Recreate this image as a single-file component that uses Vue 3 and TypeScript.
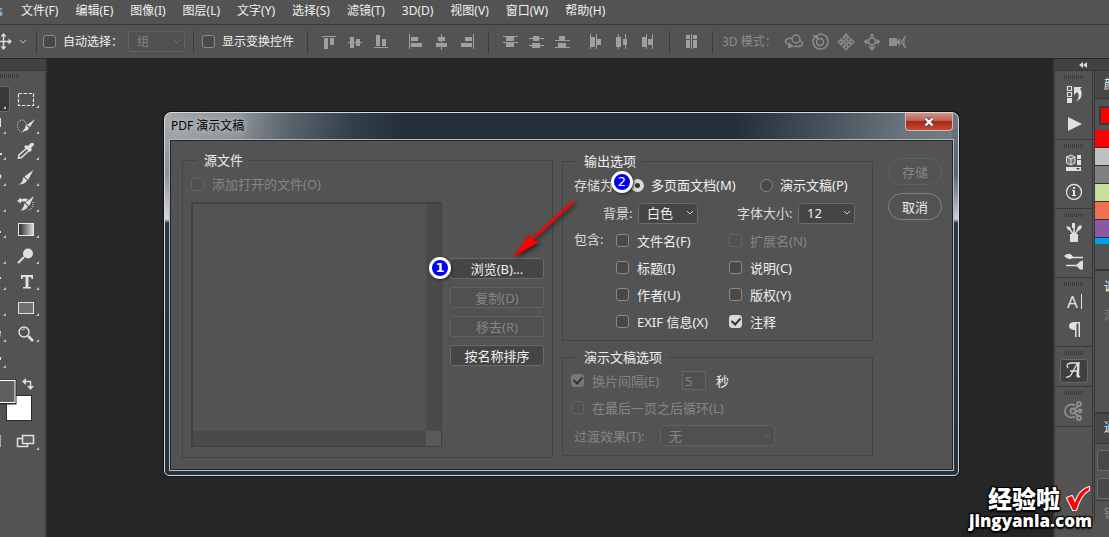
<script setup lang="ts">
import { ref } from 'vue'

interface Tool { name: string; kind: string }
interface Rail { name: string; icons: string[] }

const menus: string[] = ['文件(F)', '编辑(E)', '图像(I)', '图层(L)', '文字(Y)', '选择(S)', '滤镜(T)', '3D(D)', '视图(V)', '窗口(W)', '帮助(H)']

const alignGroups: { name: string; d: string }[][] = [
  [
    { name: '顶对齐', d: 'M1 2h14v1H1zM3 4h4v11H3zM9 4h4v7H9z' },
    { name: '垂直居中对齐', d: 'M1 8h14v1H1zM3 3h4v11H3zM9 5h4v7H9z' },
    { name: '底对齐', d: 'M1 13h14v1H1zM3 1h4v11H3zM9 5h4v7H9z' },
  ],
  [
    { name: '左对齐', d: 'M2 0h1v15H2zM4 3h7v4H4zM4 9h11v4H4z' },
    { name: '水平居中对齐', d: 'M8 0h1v16H8zM5 3h7v4H5zM3 9h11v4H3z' },
    { name: '右对齐', d: 'M14 0h1v15h-1zM6 3h7v4H6zM2 9h11v4H2z' },
  ],
  [
    { name: '按顶分布', d: 'M1 2h15v1H1zM4 3h8v4H4zM1 8h15v1H1zM4 9h8v4H4z' },
    { name: '垂直居中分布', d: 'M1 4h15v1H1zM5 2h6v5H5zM1 11h15v1H1zM4 9h8v5H4z' },
    { name: '按底分布', d: 'M1 6h15v1H1zM5 2h6v4H5zM1 13h15v1H1zM4 9h8v4H4z' },
  ],
  [
    { name: '按左分布', d: 'M2 0h1v15H2zM3 3h4v10H3zM8 0h1v15H8zM9 5h4v6H9z' },
    { name: '水平居中分布', d: 'M4 0h1v15H4zM2 3h5v10H2zM11 0h1v15h-1zM9 5h4v6H9z' },
    { name: '按右分布', d: 'M6 0h1v15H6zM2 3h4v10H2zM12 0h1v15h-1zM8 5h4v6H8z' },
  ],
]

const tools: Tool[] = [
  { name: '矩形选框', kind: 'marquee' },
  { name: '快速选择', kind: 'quick' },
  { name: '吸管', kind: 'dropper' },
  { name: '画笔', kind: 'brush' },
  { name: '历史记录画笔', kind: 'history' },
  { name: '渐变', kind: 'gradient' },
  { name: '减淡', kind: 'dodge' },
  { name: '文字', kind: 'type' },
  { name: '矩形', kind: 'rect' },
  { name: '缩放', kind: 'zoom' },
]

const edgePaths: string[] = [
  '', 'M0 6h1v9H0z', 'M0 15h2v2H0z', 'M0 10q3 2 0 5z', '', 'M0 15h1v2H0z', '', 'M0 9h1v2H0z', '', 'M0 11h1l-1 7z', 'M0 11h1v3H0z',
]

const rails: Rail[] = [
  { name: '历史记录', icons: ['history', 'play'] },
  { name: '属性', icons: ['props', 'info'] },
  { name: '画笔', icons: ['brushes', 'presets'] },
  { name: '字符', icons: ['char', 'para'] },
  { name: '字形', icons: ['glyph'] },
  { name: '共享', icons: ['share'] },
]

const saveAs = ref<string>('multi')
const background = ref<string>('白色')
const fontSize = ref<string>('12')
const transition = ref<string>('无')
const seconds = ref<string>('5')

const includes = ref([
  { label: '文件名(F)', on: false, off: false },
  { label: '扩展名(N)', on: false, off: true },
  { label: '标题(I)', on: false, off: false },
  { label: '说明(C)', on: false, off: false },
  { label: '作者(U)', on: false, off: false },
  { label: '版权(Y)', on: false, off: false },
  { label: 'EXIF 信息(X)', on: false, off: false },
  { label: '注释', on: true, off: false },
])
</script>

<template>
  <div class="app">
    <nav class="menubar">
      <span class="logo">Ps</span>
      <button v-for="m in menus" :key="m" type="button" class="menu">{{ m }}</button>
    </nav>

    <div class="options">
      <svg class="move" width="12" height="18" viewBox="0 0 12 18" aria-hidden="true">
        <path d="M0 8.500h9M3.500 3v12" stroke="#dcdcdc" stroke-width="1.500" fill="none" />
        <path d="M3.500 0l3 3.500h-6zM3.500 17l3-3.500h-6zM12 8.500L8.500 5.500v6z" fill="#dcdcdc" />
      </svg>
      <svg class="movechev" width="8" height="6" viewBox="0 0 8 6" aria-hidden="true"><path d="M1 1l3 3 3-3" fill="none" stroke="#c8c8c8" /></svg>
      <i class="sep"></i>
      <label class="opt auto"><input type="checkbox" class="box" />自动选择：</label>
      <span class="pick off group">
        <select disabled aria-label="自动选择目标"><option>组</option></select>
        <svg width="8" height="6" viewBox="0 0 8 6" aria-hidden="true"><path d="M1 1l3 3 3-3" /></svg>
      </span>
      <i class="sep"></i>
      <label class="opt show"><input type="checkbox" class="box" />显示变换控件</label>
      <i class="sep"></i>
      <template v-for="(g, gi) in alignGroups" :key="gi">
        <div class="aligns">
          <button v-for="a in g" :key="a.name" type="button" class="ico" :aria-label="a.name">
            <svg width="16" height="16" viewBox="0 0 16 16" shape-rendering="crispEdges"><path :d="a.d" fill="#a0a0a0" /></svg>
          </button>
        </div>
        <i v-if="gi % 2 === 1" class="sep"></i>
      </template>
      <div class="aligns">
        <button type="button" class="ico" aria-label="自动对齐图层">
          <svg width="16" height="16" viewBox="0 0 16 16" shape-rendering="crispEdges"><path d="M3 1h4v4H3zM3 6h4v8H3zM8 0h1v15H8zM10 1h4v4h-4zM10 6h4v8h-4z" fill="#a0a0a0" /></svg>
        </button>
      </div>
      <i class="sep"></i>
      <span class="mode">3D 模式：</span>
      <div class="modes">
        <button type="button" class="ico" aria-label="旋转 3D 对象">
          <svg width="20" height="18" viewBox="0 0 20 18" fill="none" stroke="#8c8c8c" stroke-width="1.500"><circle cx="12" cy="6" r="4" /><path d="M7.500 5C2 5 0 8 3 10.500l3 2M16 7c4 3 3 6-2 6.500l-4-.5" /><path d="M5 9l5 5-6 1z" fill="#8c8c8c" stroke="none" /></svg>
        </button>
        <button type="button" class="ico" aria-label="滚动 3D 对象">
          <svg width="18" height="18" viewBox="0 0 18 18" fill="none" stroke="#8c8c8c" stroke-width="1.500"><circle cx="9" cy="9" r="3.500" /><path d="M4 3.500a7.500 7.500 0 1 0 3-2" /><path d="M1 2h6v5z" fill="#8c8c8c" stroke="none" /></svg>
        </button>
        <button type="button" class="ico" aria-label="拖动 3D 对象">
          <svg width="18" height="18" viewBox="0 0 18 18" fill="none" stroke="#8c8c8c" stroke-width="1.300"><path d="M9 1l3 3.500h-2v3.500h3.500V6L17 9l-3.500 3v-2H10v3.500h2L9 17l-3-3.500h2V10H4.500v2L1 9l3.500-3v2H8V4.500H6z" /></svg>
        </button>
        <button type="button" class="ico" aria-label="滑动 3D 对象">
          <svg width="18" height="18" viewBox="0 0 18 18"><circle cx="9" cy="8.500" r="3.500" fill="none" stroke="#8c8c8c" stroke-width="1.500" /><path d="M9 0l2.500 3.500h-5zM9 18l4-4.500H5zM0 9l4.500-3.500v6zM18 9l-4.500-3.500v6z" fill="#8c8c8c" /></svg>
        </button>
        <button type="button" class="ico" aria-label="缩放 3D 相机">
          <svg width="20" height="14" viewBox="0 0 20 14"><path d="M1 3h8v8H1zM9 6l3-3v8L9 8z" fill="#8c8c8c" /><path d="M18 1l-5 6 5 6M16 4v6" fill="none" stroke="#8c8c8c" stroke-width="1.200" /></svg>
        </button>
      </div>
    </div>

    <div class="work">
      <aside class="toolbar">
        <div class="cap"></div>
        <div class="tgrip"><i class="grip"></i></div>
        <div class="tcols">
          <div class="tcol edge">
            <button v-for="(p, i) in edgePaths" :key="i" type="button" class="ecell" :class="{ on: i === 0 }" :aria-label="'工具 ' + (i + 1)">
              <svg width="10" height="26" viewBox="0 0 10 26"><path :d="p" fill="#e0e0e0" /><path d="M6 19v3H3z" fill="#c4c4c4" /></svg>
            </button>
          </div>
          <div class="tcol">
            <button v-for="t in tools" :key="t.kind" type="button" class="tcell" :aria-label="t.name">
              <svg width="26" height="26" viewBox="0 0 26 26">
                <rect v-if="t.kind === 'marquee'" x="4.500" y="7.500" width="15" height="12" fill="none" stroke="#e4e4e4" stroke-width="1.200" stroke-dasharray="3.500 1.500" />
                <g v-else-if="t.kind === 'quick'">
                  <ellipse cx="8" cy="14" rx="4.500" ry="6" fill="none" stroke="#e4e4e4" stroke-dasharray="1 1" />
                  <path d="M21 7l-5 8-3-2zM12 13l3 3q-2 4-7 3 3-1 4-6z" fill="#e0e0e0" />
                </g>
                <g v-else-if="t.kind === 'dropper'">
                  <path d="M13 10l-8 7-.5 3 3-.5 8-7.500" fill="none" stroke="#e0e0e0" stroke-width="1.500" />
                  <path d="M10 9l2-2 2 1 3-3q3-1 3 2l-3 3 1 2-2 2z" fill="#e0e0e0" />
                </g>
                <path v-else-if="t.kind === 'brush'" d="M19.500 6l-5.500 10-3.500-3.500zM9.500 13l3.500 3.500q-2 4-8 4 3.500-2 4.500-7.500z" fill="#e0e0e0" />
                <g v-else-if="t.kind === 'history'">
                  <path d="M20 6l-5 10-3.500-3.500zM10.500 13l3.500 3.500q-2 4-7.500 4 3-2 4-7.500z" fill="#e0e0e0" />
                  <path d="M3 11l4-3.500v2q4-2 7 0l-2 2H7v2z" fill="#e0e0e0" />
                  <path d="M19 12v3q0 4-5 5" fill="none" stroke="#e0e0e0" stroke-dasharray="1 1" />
                </g>
                <g v-else-if="t.kind === 'gradient'">
                  <defs><linearGradient id="gradFill"><stop offset="0" stop-color="#2a2a2a" /><stop offset="1" stop-color="#dcdcdc" /></linearGradient></defs>
                  <rect x="4.500" y="7.500" width="15" height="12" fill="url(#gradFill)" stroke="#e8e8e8" />
                </g>
                <g v-else-if="t.kind === 'dodge'"><circle cx="14" cy="11.500" r="5" fill="#e0e0e0" /><path d="M10 15l-6 6" stroke="#e0e0e0" stroke-width="2" /></g>
                <path v-else-if="t.kind === 'type'" d="M7 7h12v4h-1.500l-.5-2h-2.500v10H17v1.500H9V19h2.500V9H9l-.5 2H7z" fill="#e0e0e0" />
                <rect v-else-if="t.kind === 'rect'" x="4.500" y="8.500" width="15" height="11" fill="#707070" stroke="#e0e0e0" />
                <g v-else fill="none" stroke="#e0e0e0"><circle cx="10" cy="12" r="5" stroke-width="1.500" /><path d="M8 10q1-1 3-1" /><path d="M14 16l5 5" stroke-width="2.500" /></g>
                <path d="M25 19v3h-3z" fill="#c4c4c4" />
              </svg>
            </button>
          </div>
        </div>
        <svg class="swatches" width="46" height="74" viewBox="0 0 46 74" aria-label="前景色和背景色">
          <rect x="6.500" y="18.500" width="25" height="25" fill="#fff" stroke="#2a2a2a" />
          <rect x="-10" y="2.500" width="26.500" height="25" fill="#2a2a2a" />
          <rect x="-10" y="3.500" width="25" height="22" fill="#606060" stroke="#fff" />
          <path d="M24.500 4.500h6v5.500" fill="none" stroke="#dcdcdc" stroke-width="1.500" /><path d="M22 4.500l4-3.500v7zM30.500 13l-3.500-4h7z" fill="#dcdcdc" />
          <path d="M0 58h1v12H0z" fill="#a8a8a8" />
          <path d="M17.500 61.500h10v8h-10z" fill="none" stroke="#e0e0e0" stroke-width="1.500" /><path d="M22.500 58.500h11v8h-11z" fill="#606060" stroke="#e0e0e0" stroke-width="1.500" />
          <path d="M39 70v3h-3z" fill="#c4c4c4" />
        </svg>
      </aside>

      <main class="canvas">
        <section class="dialog" role="dialog" aria-labelledby="dlgTitle">
          <header class="title">
            <h1 id="dlgTitle">PDF 演示文稿</h1>
            <button type="button" class="close" aria-label="关闭">
              <svg width="12" height="10" viewBox="0 0 12 10"><path d="M2.500 1.500l7 7M9.500 1.500l-7 7" stroke="#4a4250" stroke-width="4" /><path d="M2.500 1.500l7 7M9.500 1.500l-7 7" stroke="#fff" stroke-width="2.400" /></svg>
            </button>
          </header>
          <form class="body" @submit.prevent>
            <fieldset class="source">
              <legend>源文件</legend>
              <label class="check off"><input type="checkbox" class="box" disabled />添加打开的文件(O)</label>
              <div class="files">
                <div class="list"><i class="vbar"></i><i class="hbar"></i><i class="corner"></i></div>
                <div class="acts">
                  <button type="button">浏览(B)...</button>
                  <button type="button" disabled>复制(D)</button>
                  <button type="button" disabled>移去(R)</button>
                  <button type="button">按名称排序</button>
                </div>
              </div>
            </fieldset>

            <div class="settings">
              <fieldset class="output">
                <legend>输出选项</legend>
                <div class="saveas">
                  <span class="soft">存储为:</span>
                  <label class="check"><input v-model="saveAs" type="radio" name="saveas" value="multi" class="dot" />多页面文档(M)</label>
                  <label class="check"><input v-model="saveAs" type="radio" name="saveas" value="show" class="dot" />演示文稿(P)</label>
                </div>
                <div class="looks">
                  <label for="bg" class="bg soft">背景:</label>
                  <span class="pick w60">
                    <select id="bg" v-model="background"><option>白色</option><option>灰色</option><option>黑色</option></select>
                    <svg width="8" height="6" viewBox="0 0 8 6" aria-hidden="true"><path d="M1 1l3 3 3-3" /></svg>
                  </span>
                  <label for="fs" class="fs soft">字体大小:</label>
                  <span class="pick w57">
                    <select id="fs" v-model="fontSize"><option>12</option><option>14</option></select>
                    <svg width="8" height="6" viewBox="0 0 8 6" aria-hidden="true"><path d="M1 1l3 3 3-3" /></svg>
                  </span>
                </div>
                <div class="include">
                  <span class="soft">包含:</span>
                  <div class="incgrid">
                    <label v-for="c in includes" :key="c.label" class="check" :class="{ off: c.off }"><input v-model="c.on" type="checkbox" class="box" :disabled="c.off" />{{ c.label }}</label>
                  </div>
                </div>
              </fieldset>

              <fieldset class="show-opts">
                <legend>演示文稿选项</legend>
                <div class="line">
                  <label class="check off every"><input type="checkbox" class="box" checked disabled />换片间隔(E)</label>
                  <input id="sec" v-model="seconds" class="sec" disabled aria-label="换片间隔秒数" />
                  <label for="sec">秒</label>
                </div>
                <div class="line"><label class="check off"><input type="checkbox" class="box" disabled />在最后一页之后循环(L)</label></div>
                <div class="line fx">
                  <label for="tr" class="off">过渡效果(T):</label>
                  <span class="pick off w115">
                    <select id="tr" v-model="transition" disabled><option>无</option></select>
                    <svg width="8" height="6" viewBox="0 0 8 6" aria-hidden="true"><path d="M1 1l3 3 3-3" /></svg>
                  </span>
                </div>
              </fieldset>
            </div>

            <div class="confirm">
              <button type="button" disabled>存储</button>
              <button type="button">取消</button>
            </div>
          </form>

          <span class="badge one">1</span>
          <span class="badge two">2</span>
          <svg class="arrow" width="80" height="72" viewBox="0 0 80 72" aria-hidden="true">
            <path d="M68 7L26 45" stroke="#f00" stroke-width="2.500" stroke-linecap="round" />
            <path d="M9 61L24 40l2 5 7 2z" fill="#f00" stroke="#f00" />
          </svg>
        </section>
      </main>

      <aside class="dock">
        <div class="cap"><svg width="8" height="6" viewBox="0 0 8 6" aria-hidden="true"><path d="M4 0v6L0 3zM8 0v6L4 3z" fill="#d8d8d8" /></svg></div>
        <div class="dockcols">
          <div class="rail">
            <div v-for="r in rails" :key="r.name" class="rgroup">
              <i class="grip"></i>
              <button v-for="k in r.icons" :key="k" type="button" class="rbtn" :class="{ sel: k === 'glyph' }" :aria-label="r.name + ' ' + k">
                <svg width="22" height="22" viewBox="0 0 22 22">
                  <g v-if="k === 'history'"><path d="M4.500 2.500h4v4h-4zM4.500 8.500h4v4h-4z" fill="none" stroke="#e0e0e0" stroke-width="1.200" /><path d="M4 14h5v5H4zM11 3h8l-2 2 1 1q3 7-5 12 5-7 1-10l-3 3z" fill="#e0e0e0" /></g>
                  <path v-else-if="k === 'play'" d="M5 4l14 7-14 7z" fill="#e0e0e0" />
                  <g v-else-if="k === 'props'"><path d="M3.500 4l4.500-2 4 2v6l-4 2-4.500-2z" fill="#777" stroke="#e0e0e0" /><path d="M3.500 4l4.500 2 4-2M8 6v6" stroke="#e0e0e0" fill="none" /><path d="M14 2h4v4h-4zM14 7h4v5h-4zM3 14h15v4H3z" fill="#e0e0e0" /><path d="M13 15h4l-2 2z" fill="#444" /></g>
                  <g v-else-if="k === 'info'"><circle cx="11" cy="10" r="7.500" fill="none" stroke="#e0e0e0" stroke-width="1.300" /><path d="M10 5h2v2h-2zM9 8h3v5h1v1H9v-1h1V9H9z" fill="#e0e0e0" /></g>
                  <g v-else-if="k === 'brushes'"><path d="M7 12h8v8H7z" fill="#e0e0e0" /><path d="M10 12L6 6M11 12V4M12 12l4-6" stroke="#e0e0e0" stroke-width="1.500" /><path d="M3 4l4 1 1 3-3 0zM9 1h3v5H9zM14 6l3-3 2 1-1 3-3 2z" fill="#e0e0e0" /></g>
                  <g v-else-if="k === 'presets'"><path d="M8 6.500h12M3 14.500h12" stroke="#e0e0e0" stroke-width="1.500" /><path d="M1 5q6-5 9 1-3 5-9-1zM13 14.500l4-4 3-1v9h-3z" fill="#e0e0e0" /></g>
                  <g v-else-if="k === 'char'"><text x="4" y="17" font-size="17" fill="#e0e0e0">A</text><path d="M18.500 3v15" stroke="#e0e0e0" /></g>
                  <path v-else-if="k === 'para'" d="M17 2v15h-1.500V3.500h-2V17H12v-7Q6 10 6 6t6-4z" fill="#e0e0e0" />
                  <g v-else-if="k === 'glyph'"><path d="M3 17q4 1 6-4l5-9M15 3l-1 13q1 2 3 0M7 11h8M5 8q-3-4 3-5h9" fill="none" stroke="#e0e0e0" stroke-width="1.300" /><path d="M14 4h2.500l-.5 13h-2z" fill="#e0e0e0" /></g>
                  <g v-else fill="none" stroke="#909090" stroke-width="1.800"><path d="M12 5.500a6.500 6.500 0 1 0 0 11" /><circle cx="10" cy="11" r="2.500" /><circle cx="16" cy="4" r="2" /><circle cx="17" cy="11" r="1.500" /><circle cx="16" cy="18" r="2" /><path d="M12 9l3-3M12.500 11H15M12 13l3 3" /></g>
                </svg>
              </button>
            </div>
          </div>
          <div class="panels">
            <div class="ptab"><span>颜色</span></div>
            <div class="pcur"><i></i></div>
            <i class="sw s1"></i><i class="sw s2"></i><i class="sw s3"></i><i class="sw s4"></i><i class="sw s5"></i><i class="sw s6"></i><i class="sw s7"></i>
            <div class="adj"><span>调整</span><span class="dim">添加</span></div>
            <div class="ptab low"><span>通道</span></div>
            <div class="prow"><i></i></div>
            <div class="prow"><i></i></div>
            <div class="lock"><span class="dim">锁定</span></div>
          </div>
        </div>
      </aside>
    </div>

    <div class="mark">
      <div class="mtop"><span>经验啦</span>
        <svg width="28" height="28" viewBox="0 0 28 28" aria-hidden="true"><path d="M3 13l5-2 3 7Q15 5 25 2v3Q17 9 12 25H9z" fill="#f00" stroke="#fff" stroke-width="2" stroke-linejoin="round" /><path d="M3 13l5-2 3 7Q15 5 25 2v3Q17 9 12 25H9z" fill="#f00" /></svg>
      </div>
      <div class="mbot">jingyanla.com</div>
    </div>
  </div>
</template>

<style>
body { background: #262626; }
</style>

<style scoped>
.app { position: relative; display: flex; flex-direction: column; min-height: 100vh; overflow: hidden; background: #535353; color: #f0f0f0; font: 13px/16px "Noto Sans", "Noto Sans CJK SC", sans-serif; }
.app * { box-sizing: border-box; }
button, select, input { font: inherit; color: inherit; margin: 0; }
button { padding: 0; border: 0; background: none; white-space: nowrap; }
svg { display: block; flex: none; }

.menubar { display: flex; align-items: center; height: 25px; padding-bottom: 3px; border-bottom: 1px solid #383838; font-size: 12px; }
.logo { display: flex; justify-content: flex-end; width: 3px; margin-right: 18px; overflow: hidden; color: #7fb0e0; font-size: 14px; font-weight: 700; }
.menu { margin-right: 17px; }

.options { display: flex; align-items: center; height: 34px; border-bottom: 1px solid #262626; font-size: 12px; }
.movechev { margin: 0 9px 0 7px; }
.sep { flex: none; width: 1px; height: 22px; background: #3c3c3c; }
.opt { display: flex; align-items: center; gap: 7px; white-space: nowrap; }
.auto { width: 85px; margin-left: 6px; overflow: hidden; }
.show { width: 105px; margin-left: 8px; }
.group { width: 57px; margin-right: 8px; }
.aligns { display: flex; margin-left: 8px; }
.aligns + .sep { margin-left: 8px; }
.ico { display: flex; justify-content: center; width: 26px; }
.mode { width: 59px; margin-left: 9px; color: #8c8c8c; white-space: nowrap; }
.modes { display: flex; align-items: center; }

.box, .dot { flex: none; appearance: none; display: grid; place-items: center; width: 13px; height: 13px; border: 1px solid #8a8a8a; border-radius: 3px; background: #484848; }
.dot { border-radius: 50%; }
.box:checked { border-color: #dadada; background: #dadada; }
.box:checked::before { content: ""; width: 4px; height: 7px; margin-bottom: 2px; border: solid #333; border-width: 0 2px 2px 0; transform: rotate(42deg); }
.dot:checked { border: 4px solid #d8d8d8; background: #333; }
.box:disabled { border-color: #646464; background: #505050; }
.box:checked:disabled { border-color: #787878; background: #787878; }

.pick { display: grid; align-items: center; height: 21px; }
.pick select { grid-area: 1 / 1; appearance: none; width: 100%; height: 21px; padding: 0 0 0 8px; border: 1px solid #6a6a6a; border-radius: 3px; background: #454545; color: #f0f0f0; opacity: 1; }
.pick svg { grid-area: 1 / 1; justify-self: end; margin-right: 4px; fill: none; stroke: #d0d0d0; pointer-events: none; }
.pick.off select { border-color: #626262; background: #505050; color: #858585; }
.pick.off svg { stroke: #6c6c6c; }
.w60 { width: 60px; }
.w57 { width: 57px; }
.w115 { width: 115px; }

.work { display: grid; grid-template-columns: 47px 1fr 56px; flex: 1; }
.cap { display: flex; align-items: center; height: 12px; border-bottom: 1px solid #383838; background: #424242; }
.toolbar { border-right: 2px solid #3a3a3a; overflow: hidden; }
.grip { display: block; width: 20px; height: 4px; background: repeating-linear-gradient(90deg, #3c3c3c 0 1px, #535353 1px 2px); }
.tgrip { padding: 3px 0 8px; }
.tcols { display: flex; }
.tcol { display: flex; flex-direction: column; }
.edge { width: 14px; }
.ecell { width: 10px; height: 26px; }
.ecell.on { border: 1px solid #6a6a6a; border-left: 0; border-radius: 0 3px 3px 0; background: #383838; }
.tcell { width: 26px; height: 26px; }
.swatches { margin-top: 5px; }

.canvas { position: relative; background: #262626; }
.dialog { position: absolute; left: 117px; top: 53px; width: 795px; padding: 0 5px 5px; border: 1px solid #d4dadd; border-radius: 7px 7px 5px 5px; box-shadow: 0 0 0 1px #111; background:
  linear-gradient(#a9adb0 0, #8a9197 60px, #d4d7d9 106px, #2a3846 110px, #26333f) left / 6px 100% no-repeat,
  linear-gradient(#6f7880 0, #59636c 60px, #c8cdd0 106px, #2a3846 110px, #26333f) right / 6px 100% no-repeat,
  linear-gradient(100deg, #a2a6a9 0, #90969a 70px, #59636c 125px, #34404b 185px, #232e39 240px, #232e39 560px, #46515b 650px, #6b747c 730px, #737c83) top / 100% 26px no-repeat,
  #26333f; }
.title { display: flex; justify-content: space-between; height: 27px; }
h1 { margin: 0; padding: 4px 8px 0 1px; color: #000; font-size: 12px; font-weight: 400; line-height: 18px; text-shadow: 0 0 6px #ccc, 0 0 8px #bbb; }
.close { display: grid; place-items: center; width: 48px; height: 18px; border: 1px solid #c9bcbb; border-top: 0; border-radius: 0 0 4px 4px; background: linear-gradient(#cf9289, #c1604f 45%, #a52a17 50%, #c8492c); }
.body { display: grid; grid-template-columns: 371fr 311fr 60px; column-gap: 9px; padding: 11px 10px 11px 11px; border: 1px solid #20262c; outline: 1px solid #b4bcc2; background: #535353; }
fieldset { min-width: 0; margin: 0; border: 1px solid #444; }
legend { padding: 0 6px 0 7px; line-height: 16px; }
.source { padding: 7px 8px 10px; }
.source legend { margin-left: 6px; }
.check { display: flex; align-items: center; gap: 8px; white-space: nowrap; }
.off { color: #858585; }
.soft { color: #dcdcdc; }
.source .check { height: 18px; }
.files { display: grid; grid-template-columns: 1fr 94px; gap: 8px; margin-top: 9px; }
.list { display: grid; grid-template: 1fr 15px / 1fr 15px; height: 245px; border: 2px solid #424242; border-width: 2px 1px 1px 2px; }
.vbar { grid-area: 1 / 2; background: #4a4a4a; }
.hbar { grid-area: 2 / 1; background: #4a4a4a; }
.corner { grid-area: 2 / 2; background: #5a5a5a; }
.acts { display: flex; flex-direction: column; gap: 8px; padding-top: 56px; }
.acts button { height: 21px; border: 1px solid #6a6a6a; border-radius: 3px; background: #454545; }
.acts button:disabled { border-color: #626262; background: #505050; color: #858585; }

.settings { display: flex; flex-direction: column; gap: 8px; padding-top: 1px; }
.output, .show-opts { padding: 2px 11px 5px; }
.output legend, .show-opts legend { margin-left: 3px; }
.saveas { display: grid; grid-template-columns: 57px 129px 1fr; align-items: center; height: 28px; }
.saveas .check { gap: 7px; }
.looks { display: flex; align-items: center; height: 28px; padding-left: 29px; }
.bg { width: 35px; }
.fs { width: 61px; margin-left: 39px; white-space: nowrap; }
.include { display: grid; grid-template-columns: 42px 1fr; line-height: 24px; }
.incgrid { display: grid; grid-template-columns: 113px 1fr; grid-auto-rows: 27px; }
.line { display: flex; align-items: center; height: 27px; }
.show-opts .check { margin-left: -3px; }
.every { width: 111px; }
.sec { width: 24px; height: 19px; margin-right: 10px; padding: 0 2px; border: 1px solid #676767; background: #505050; color: #858585; }
.fx label { width: 86px; white-space: nowrap; }
.fx { height: 29px; }
.confirm { display: flex; flex-direction: column; gap: 8px; padding: 6px 0 0 6px; }
.confirm button { height: 27px; border: 1px solid #858585; border-radius: 14px; }
.confirm button:disabled { border-color: #616161; color: #858585; }

.badge { position: absolute; display: grid; place-items: center; width: 22px; height: 22px; border: 3px solid #fff; border-radius: 50%; background: #0000f0; box-shadow: 1px 1px 3px #222; color: #fff; font: 13px/16px "DejaVu Sans", sans-serif; }
.one { left: 264px; top: 144px; font-weight: 700; }
.two { left: 446px; top: 58px; }
.arrow { position: absolute; left: 340px; top: 82px; filter: drop-shadow(2px 2px 2px #222); }

.dock { border-left: 2px solid #3a3a3a; overflow: hidden; }
.dock .cap { padding-left: 24px; }
.dockcols { display: grid; grid-template-columns: 38px 15px; gap: 1px; }
.rail { border-right: 1px solid #383838; }
.rgroup { padding: 4px 0 1px; border-bottom: 1px solid #383838; }
.rgroup .grip { margin-left: 9px; }
.rgroup .grip + .rbtn { margin-top: 1px; }
.rbtn { display: grid; place-items: center; width: 38px; height: 29px; }
.rbtn.sel svg { width: 28px; height: 24px; border: 1px solid #6a6a6a; border-radius: 3px; background: #404040; }
.panels { display: flex; flex-direction: column; border-left: 1px solid #383838; font-size: 12px; }
.panels span { display: block; margin-left: 9px; white-space: nowrap; }
.panels .dim { color: #8c8c8c; }
.ptab { height: 28px; padding-top: 6px; border-bottom: 1px solid #383838; background: #484848; }
.pcur { height: 31px; padding: 7px 0 0 4px; }
.pcur i { display: block; height: 19px; border: 2px solid #3a3a3a; border-right: 0; background: #f00; }
.sw { height: 18px; border-bottom: 1px solid #333; }
.s1 { background: #f00; }
.s2 { background: #c0c0c0; }
.s3 { background: #808080; }
.s4 { background: #c8e09a; }
.s5 { background: #f07050; }
.s6 { background: #8859a5; }
.s7 { height: 6px; border: 0; background: #00a0e9; }
.adj { height: 145px; margin-top: 25px; padding-top: 8px; border: solid #383838; border-width: 2px 0; }
.adj .dim { margin-top: 13px; }
.low { height: 30px; }
.prow { height: 28px; padding: 6px 0 0 2px; }
.prow i { display: block; height: 21px; border: 1px solid #6a6a6a; border-right: 0; border-radius: 3px 0 0 3px; background: #484848; }
.lock { padding-top: 5px; border-top: 1px solid #383838; }

.mark { position: absolute; right: 17px; bottom: 6px; color: #fff; font-family: "Open Sans", "Noto Sans CJK SC", sans-serif; font-weight: 900; text-shadow: 1px 1px 1px #000, -1px -1px 1px #000, 1px -1px 1px #000, -1px 1px 1px #000, 0 2px 2px #000; }
.mtop { display: flex; align-items: center; justify-content: flex-end; gap: 4px; height: 24px; font-size: 24px; line-height: 24px; }
.mbot { font-size: 17px; font-weight: 800; line-height: 20px; text-align: right; }
</style>
